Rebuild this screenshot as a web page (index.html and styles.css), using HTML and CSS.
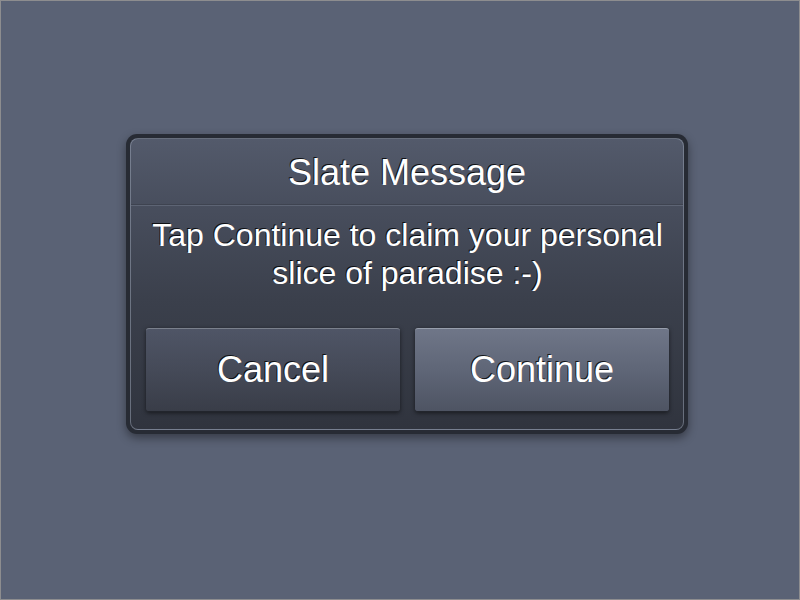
FILE: index.html
```html
<!DOCTYPE html>
<html>
<head>
<meta charset="utf-8">
<link rel="stylesheet" href="styles.css">
</head>
<body>
<div class="stage">
  <div class="dialog">
    <div class="panel">
      <div class="title">Slate Message</div>
      <div class="message">Tap Continue to claim your personal<br>slice of paradise :-)</div>
      <div class="buttons">
        <div class="btn btn-cancel">Cancel</div>
        <div class="btn btn-continue">Continue</div>
      </div>
    </div>
  </div>
</div>
</body>
</html>
```
FILE: styles.css
```css
html, body {
  margin: 0;
  padding: 0;
}
body {
  width: 800px;
  height: 600px;
  font-family: "Liberation Sans", Arial, sans-serif;
  background: #5a6275;
}
.stage {
  box-sizing: border-box;
  width: 800px;
  height: 600px;
  border: 1px solid #8d8d8f;
  padding: 133px 0 0 125px;
  display: flex;
  align-items: flex-start;
}
.dialog {
  width: 554px;
  padding: 4px;
  background: #272b34;
  border-radius: 11px;
  box-shadow: 0 4px 10px rgba(0, 0, 0, 0.4);
}
.panel {
  border: 1px solid rgba(150, 158, 175, 0.55);
  border-radius: 8px;
  background: linear-gradient(to bottom, #535a6b 0%, #474d5c 25%, #3b404c 55%, #30343e 100%);
  padding: 0 14px 17px 15px;
  color: #fff;
  text-shadow: -1px -1px 0 rgba(0, 0, 0, 0.8);
}
.title {
  font-size: 36px;
  line-height: 40px;
  text-align: center;
  padding: 14px 0 11px;
  margin: 0 -14px 0 -15px;
  border-bottom: 1px solid #3e4350;
  box-shadow: 0 1px 0 rgba(120, 128, 145, 0.45);
}
.message {
  font-size: 32px;
  line-height: 38px;
  text-align: center;
  padding-top: 11px;
}
.buttons {
  display: flex;
  gap: 15px;
  margin-top: 36px;
}
.btn {
  flex: 1;
  height: 82px;
  border-radius: 3px;
  font-size: 36px;
  line-height: 82px;
  text-align: center;
  border-top: 1px solid rgba(150, 156, 170, 0.7);
  border-bottom: 1px solid #22252c;
  box-shadow: 0 1px 4px rgba(0, 0, 0, 0.55);
}
.btn-cancel {
  background: linear-gradient(to bottom, #4f5566 0%, #454a58 50%, #393d48 100%);
}
.btn-continue {
  background: linear-gradient(to bottom, #6f7688 0%, #5f6677 50%, #4e5463 100%);
  border-top-color: rgba(170, 176, 190, 0.8);
}
```
